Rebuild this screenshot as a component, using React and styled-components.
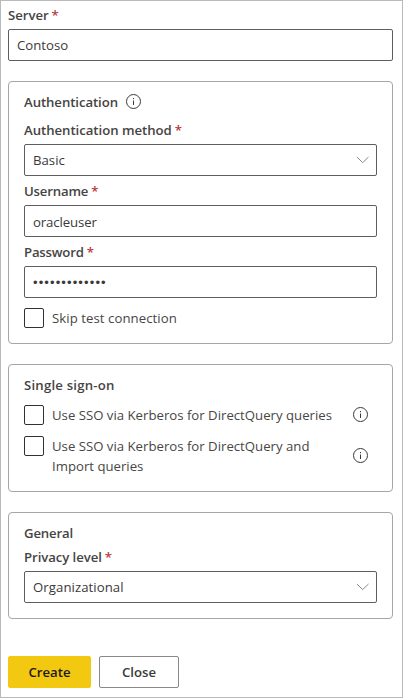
import React from 'react';
import styled, { createGlobalStyle } from 'styled-components';

const GlobalStyle = createGlobalStyle`
  *, *::before, *::after { box-sizing: border-box; }
  body {
    margin: 0;
    background: #fff;
    color: #3b3a39;
    font: 400 13.2px/20px 'Open Sans', 'Noto Sans', sans-serif;
  }
`;

const Panel = styled.form`
  width: 403px;
  height: 698px;
  padding: 4px 9px 0 7px;
  border: 1px solid #bababa;
  background: #fff;
`;

const Label = styled.div`
  height: 20px;
  margin-bottom: 4px;
  font-weight: 600;
  color: #464443;
  letter-spacing: ${(p) => p.$track || 0}px;
  white-space: nowrap;
`;

const Star = styled.span`
  margin-left: 3px;
  font-weight: 600;
  color: #b5383e;
`;

const Field = styled.div`
  display: flex;
  align-items: center;
  justify-content: space-between;
  height: 32px;
  padding: ${(p) => p.$drop || 0}px 7px 0 8px;
  border: 1px solid #605e5c;
  border-radius: 2px;
  letter-spacing: ${(p) => p.$track || 0}px;
  margin-bottom: ${(p) => p.$gap || 0}px;
`;

const Dots = styled.span`
  font: 13px/20px 'Liberation Sans', sans-serif;
  letter-spacing: 1.12px;
`;

const Card = styled.section`
  height: ${(p) => p.$height}px;
  margin-top: 20px;
  padding: 10px 15px 0;
  border: 1px solid #a6a6a6;
  border-radius: 4px;
`;

const Heading = styled.h2`
  display: flex;
  align-items: center;
  gap: 7px;
  height: 20px;
  margin: 0 0 ${(p) => p.$gap}px;
  font-size: 13.2px;
  font-weight: 600;
  color: #464443;
  letter-spacing: ${(p) => p.$track || 0}px;
`;

const Option = styled.div`
  display: flex;
  align-items: ${(p) => (p.$multi ? 'center' : 'flex-start')};
  margin-bottom: ${(p) => p.$gap || 0}px;
`;

const Box = styled.span`
  flex: none;
  align-self: flex-start;
  width: 20px;
  height: 20px;
  margin-right: 8px;
  border: 1px solid #323130;
  border-radius: 2px;
`;

const OptionText = styled.span`
  width: 300px;
  white-space: nowrap;
  color: #484644;
  letter-spacing: ${(p) => p.$track || 0}px;
`;

const Icon = styled.svg`
  display: block;
  flex: none;
`;

const Actions = styled.div`
  display: flex;
  gap: 8px;
  margin-top: 37px;
`;

const Button = styled.button`
  width: ${(p) => p.$width}px;
  height: 32px;
  padding: 0;
  border: 1px solid ${(p) => (p.$primary ? '#f2c811' : '#8a8886')};
  border-radius: 2px;
  background: ${(p) => (p.$primary ? '#f2c811' : '#fff')};
  color: ${(p) => (p.$primary ? '#1b1a19' : '#3b3a39')};
  font: 600 13.2px/20px 'Open Sans', 'Noto Sans', sans-serif;
`;

const Info = () => (
  <Icon width="16" height="16" viewBox="0 0 16 16" fill="none" stroke="#3b3a39">
    <circle cx="8.5" cy="7.5" r="7" />
    <path d="M8.5 6.5v4.5" />
    <path d="M8.5 4v1.2" />
  </Icon>
);

const Chevron = () => (
  <Icon width="13" height="8" viewBox="0 0 13 8" fill="none" stroke="#8a8886">
    <path d="M.9 1l5.8 5.6L12.5 1" />
  </Icon>
);

const Required = ({ children, track }) => (
  <Label $track={track}>
    {children}
    <Star>*</Star>
  </Label>
);

export default function App() {
  return (
    <>
      <GlobalStyle />
      <Panel>
        <Required track={-0.05}>Server</Required>
        <Field>Contoso</Field>

        <Card $height={263}>
          <Heading $gap={8} $track={-0.08}>
            Authentication
            <Info />
          </Heading>
          <Required track={-0.04}>Authentication method</Required>
          <Field $gap={5}>
            Basic
            <Chevron />
          </Field>
          <Required track={-0.18}>Username</Required>
          <Field $gap={5} $drop={2} $track={-0.1}>oracleuser</Field>
          <Required track={-0.2}>Password</Required>
          <Field $gap={10} $drop={1}>
            <Dots>•••••••••••••</Dots>
          </Field>
          <Option>
            <Box />
            <OptionText $track={0.06}>Skip test connection</OptionText>
          </Option>
        </Card>

        <Card $height={128}>
          <Heading $gap={10} $track={0.2}>Single sign-on</Heading>
          <Option $gap={11} $multi>
            <Box />
            <OptionText>Use SSO via Kerberos for DirectQuery queries</OptionText>
            <Info />
          </Option>
          <Option $multi>
            <Box />
            <OptionText>
              Use SSO via Kerberos for DirectQuery and
              <br />
              Import queries
            </OptionText>
            <Info />
          </Option>
        </Card>

        <Card $height={107}>
          <Heading $gap={4} $track={-0.15}>General</Heading>
          <Required track={-0.08}>Privacy level</Required>
          <Field $track={0.06}>
            Organizational
            <Chevron />
          </Field>
        </Card>

        <Actions>
          <Button type="button" $primary $width={83}>Create</Button>
          <Button type="button" $width={80}>Close</Button>
        </Actions>
      </Panel>
    </>
  );
}
